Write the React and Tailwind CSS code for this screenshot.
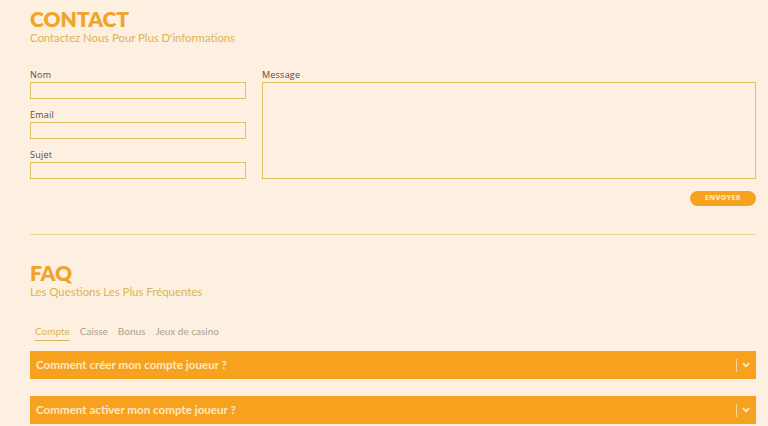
import { useState } from "react";

const Field = ({ label }) => (
    <div className="flex flex-col">
        <label className="text-[9px] leading-[12px] text-[#5a4a3a] font-medium tracking-wide">{label}</label>
        <input className="mt-[1px] h-[17px] w-full border-[1.5px] border-[#e2bf62] bg-transparent outline-none" />
    </div>
);

const Question = ({ text }) => (
    <div className="h-[28px] bg-[#f7a21e] flex items-center justify-between pl-[6px] pr-[6px]">
        <span className="text-[11.6px] font-bold text-[#fde8c4]">{text}</span>
        <div className="flex items-center gap-[5px]">
            <span className="w-px h-[13px] bg-[#fcd79a]"></span>
            <svg width="8" height="6" viewBox="0 0 8 6" fill="none">
                <path d="M1 1.2 L4 4.4 L7 1.2" stroke="#fde8c4" strokeWidth="1.8" />
            </svg>
        </div>
    </div>
);

const App = () => {
    const [tab, setTab] = useState("Compte");
    const tabs = ["Compte", "Caisse", "Bonus", "Jeux de casino"];

    return (
        <div className="w-full min-h-[426px] bg-[#fdf0e0] pl-[30px] pr-[12px] pt-[6px] font-['Lato',sans-serif] overflow-hidden">
            <h1 className="text-[21px] leading-[26px] font-extrabold text-[#f0a42a]">CONTACT</h1>
            <p className="text-[11.3px] leading-[14px] text-[#d9b458] mt-[-1px]">Contactez Nous Pour Plus D'informations</p>

            <div className="mt-[24px] flex gap-[16px] font-['Open_Sans',sans-serif]">
                <div className="w-[216px] flex flex-col gap-[10px]">
                    <Field label="Nom" />
                    <Field label="Email" />
                    <Field label="Sujet" />
                </div>
                <div className="flex-1 flex flex-col">
                    <label className="text-[9px] leading-[12px] text-[#5a4a3a] font-medium tracking-wide">Message</label>
                    <textarea className="mt-[1px] flex-1 w-full border-[1.5px] border-[#e2bf62] bg-transparent outline-none resize-none" />
                </div>
            </div>

            <div className="flex justify-end mt-[12px]">
                <button className="w-[66px] h-[15px] rounded-full bg-[#f7a21e] text-[7px] font-extrabold tracking-wider text-[#fde2b4] font-['Open_Sans',sans-serif]">
                    ENVOYER
                </button>
            </div>

            <div className="mt-[28px] h-px bg-[#ead59a]"></div>

            <h2 className="mt-[25px] text-[21px] leading-[26px] font-extrabold text-[#f0a42a]">FAQ</h2>
            <p className="text-[11.4px] leading-[14px] text-[#d9b458] mt-[-1px]">Les Questions Les Plus Fréquentes</p>

            <div className="mt-[26px] flex gap-[10px] pl-[5px]">
                {tabs.map((t) => (
                    <button
                        key={t}
                        onClick={() => setTab(t)}
                        className={
                            tab === t
                                ? "text-[10px] leading-[13px] pb-[2px] text-[#d9b458] border-b border-[#d9b458]"
                                : "text-[10px] leading-[13px] pb-[2px] text-[#a8a090] border-b border-transparent"
                        }
                    >
                        {t}
                    </button>
                ))}
            </div>

            <div className="mt-[10px] flex flex-col gap-[17px]">
                <Question text="Comment créer mon compte joueur ?" />
                <Question text="Comment activer mon compte joueur ?" />
            </div>
        </div>
    );
};

export default App;
